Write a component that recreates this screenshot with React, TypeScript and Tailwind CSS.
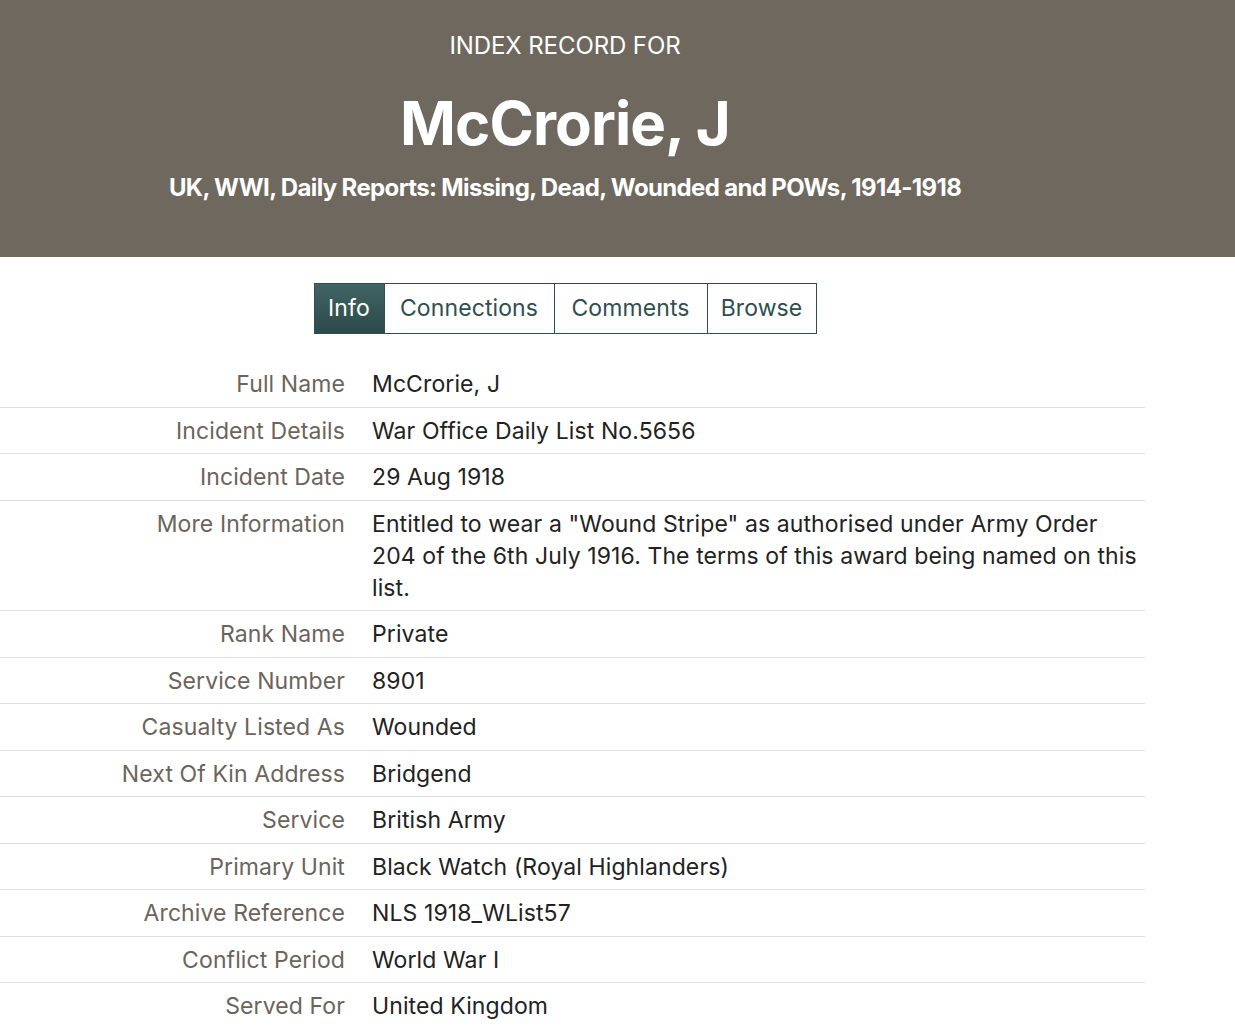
import React from 'react';

const rows: [string, string][] = [
  ['Full Name', 'McCrorie, J'],
  ['Incident Details', 'War Office Daily List No.5656'],
  ['Incident Date', '29 Aug 1918'],
  [
    'More Information',
    'Entitled to wear a "Wound Stripe" as authorised under Army Order 204 of the 6th July 1916. The terms of this award being named on this list.',
  ],
  ['Rank Name', 'Private'],
  ['Service Number', '8901'],
  ['Casualty Listed As', 'Wounded'],
  ['Next Of Kin Address', 'Bridgend'],
  ['Service', 'British Army'],
  ['Primary Unit', 'Black Watch (Royal Highlanders)'],
  ['Archive Reference', 'NLS 1918_WList57'],
  ['Conflict Period', 'World War I'],
  ['Served For', 'United Kingdom'],
];

const tabs = [
  { name: 'Info', w: 'w-[69px]' },
  { name: 'Connections', w: 'w-[170px]' },
  { name: 'Comments', w: 'w-[153px]' },
  { name: 'Browse', w: 'w-[109px]' },
];

export default function App() {
  return (
    <div className="min-h-screen bg-white font-['Inter',_'Liberation_Sans',_sans-serif]">
      <header className="bg-[#6e685e] h-[257px] text-white">
        <div className="w-[1130px] flex flex-col items-center pt-[30px]">
          <div className="text-[24px] leading-[32px] tracking-[-0.1px]">INDEX RECORD FOR</div>
          <h1 className="mt-[28px] text-[60px] leading-[66px] font-bold tracking-[-0.9px]">McCrorie, J</h1>
          <p className="mt-[17px] text-[24px] leading-[30px] font-bold tracking-[-0.65px]">
            UK, WWI, Daily Reports: Missing, Dead, Wounded and POWs, 1914-1918
          </p>
        </div>
      </header>

      <div className="w-[1130px] flex justify-center pt-[26px] pb-[27px]">
        <div className="flex border border-[#2f4f4f] text-[23px] leading-[49px] text-[#2f4f4f] tracking-[0.1px]">
          {tabs.map((t, i) => (
            <div
              key={t.name}
              className={
                i === 0
                  ? `${t.w} text-center text-white bg-gradient-to-b from-[#416464] to-[#2c4a4a]`
                  : `${t.w} text-center border-l border-[#2f4f4f]`
              }
            >
              {t.name}
            </div>
          ))}
        </div>
      </div>

      <div className="w-[1145px] text-[23px] leading-[32px] tracking-[0.1px]">
        {rows.map(([label, value], i) => (
          <div
            key={label}
            className={`flex ${i < rows.length - 1 ? 'border-b border-[#dedede]' : ''}`}
          >
            <div className="w-[358px] shrink-0 pr-[13px] pt-[7px] pb-[6.5px] text-right text-[#6b645b]">
              {label}
            </div>
            <div className="flex-1 pl-[14px] pt-[7px] pb-[6.5px] text-[#222222]">{value}</div>
          </div>
        ))}
      </div>
    </div>
  );
}
